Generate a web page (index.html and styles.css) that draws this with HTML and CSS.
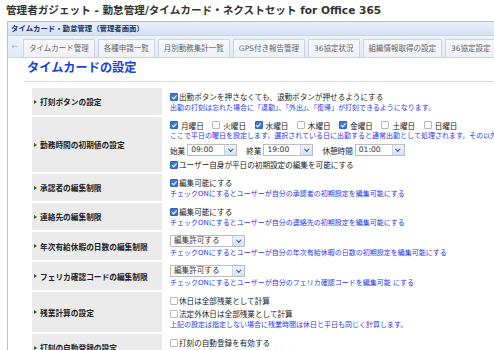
FILE: index.html
```html
<!DOCTYPE html>
<html lang="ja">
<head>
  <meta charset="UTF-8">
  <title>管理者ガジェット</title>
  <link rel="stylesheet" href="styles.css">
</head>
<body>
  <div class="page">
    <div class="page-title">管理者ガジェット - 勤怠管理/タイムカード・ネクストセット for Office 365</div>

    <div class="panel">
      <div class="panel-head">タイムカード・勤怠管理（管理者画面）</div>
      <div class="tabs">
        <span class="tab-back">&#8592;</span>
        <span class="tab">タイムカード管理</span>
        <span class="tab">各種申請一覧</span>
        <span class="tab">月別勤務集計一覧</span>
        <span class="tab">GPS付き報告管理</span>
        <span class="tab">36協定状況</span>
        <span class="tab">組織情報取得の設定</span>
        <span class="tab">36協定設定</span>
      </div>

      <div class="content">
        <div class="section-title">タイムカードの設定</div>

        <div class="settings">
          <div class="row">
            <div class="label">打刻ボタンの設定</div>
            <div class="value">
              <div class="line"><span class="cb on"></span>出勤ボタンを押さなくても、退勤ボタンが押せるようにする</div>
              <div class="note">出勤の打刻は忘れた場合に「退勤」、「外出」、「復帰」が打刻できるようになります。</div>
            </div>
          </div>

          <div class="row">
            <div class="label">勤務時間の初期値の設定</div>
            <div class="value">
              <div class="days">
                <span class="day"><span class="cb on"></span>月曜日</span>
                <span class="day"><span class="cb"></span>火曜日</span>
                <span class="day"><span class="cb on"></span>水曜日</span>
                <span class="day"><span class="cb"></span>木曜日</span>
                <span class="day"><span class="cb on"></span>金曜日</span>
                <span class="day"><span class="cb"></span>土曜日</span>
                <span class="day"><span class="cb"></span>日曜日</span>
              </div>
              <div class="note">ここで平日の曜日を設定します。選択されている日に出勤すると通常出勤として処理されます。その以外の曜日は休日として処理されます。</div>
              <div class="times">
                <span class="time-label">始業</span>
                <span class="select"><span class="select-text">09:00</span><span class="arrow"></span></span>
                <span class="time-label">終業</span>
                <span class="select"><span class="select-text">19:00</span><span class="arrow"></span></span>
                <span class="time-label">休憩時間</span>
                <span class="select"><span class="select-text">01:00</span><span class="arrow"></span></span>
              </div>
              <div class="line"><span class="cb on"></span>ユーザー自身が平日の初期設定の編集を可能にする</div>
            </div>
          </div>

          <div class="row">
            <div class="label">承認者の編集制限</div>
            <div class="value">
              <div class="line"><span class="cb on"></span>編集可能にする</div>
              <div class="note">チェックONにするとユーザーが自分の承認者の初期設定を編集可能にする</div>
            </div>
          </div>

          <div class="row">
            <div class="label">連絡先の編集制限</div>
            <div class="value">
              <div class="line"><span class="cb on"></span>編集可能にする</div>
              <div class="note">チェックONにするとユーザーが自分の連絡先の初期設定を編集可能にする</div>
            </div>
          </div>

          <div class="row">
            <div class="label">年次有給休暇の日数の編集制限</div>
            <div class="value">
              <div class="select-line">
                <span class="select wide"><span class="select-text">編集許可する</span><span class="arrow"></span></span>
              </div>
              <div class="note">チェックONにするとユーザーが自分の年次有給休暇の日数の初期設定を編集可能にする</div>
            </div>
          </div>

          <div class="row">
            <div class="label">フェリカ確認コードの編集制限</div>
            <div class="value">
              <div class="select-line">
                <span class="select wide"><span class="select-text">編集許可する</span><span class="arrow"></span></span>
              </div>
              <div class="note">チェックONにするとユーザーが自分のフェリカ確認コードを編集可能 にする</div>
            </div>
          </div>

          <div class="row">
            <div class="label">残業計算の設定</div>
            <div class="value">
              <div class="line"><span class="cb"></span>休日は全部残業として計算</div>
              <div class="line"><span class="cb"></span>法定外休日は全部残業として計算</div>
              <div class="note">上記の設定は指定しない場合に残業時間は休日と平日も同じく計算します。</div>
            </div>
          </div>

          <div class="row">
            <div class="label">打刻の自動登録の設定</div>
            <div class="value">
              <div class="line"><span class="cb"></span>打刻の自動登録を有効する</div>
              <div class="note">チェックONにすると打刻の自動登録を有効にする</div>
            </div>
          </div>
        </div>
      </div>
    </div>
  </div>
</body>
</html>
```

FILE: styles.css
```css
html, body {
  margin: 0;
  padding: 0;
  overflow: hidden;
}
body {
  font-family: "DejaVu Sans", "Noto Sans CJK JP", sans-serif;
  color: #222222;
  background: #ffffff;
}
.page {
  width: 560px;
  height: 350px;
  overflow: hidden;
}
.page-title {
  font-size: 10.6px;
  font-weight: bold;
  color: #333333;
  line-height: 14px;
  padding: 3px 0 4px 6px;
  white-space: nowrap;
}

/* panel frame */
.panel {
  margin-left: 7px;
  border: 1px solid #a9c3e8;
  border-right: none;
}
.panel-head {
  height: 13px;
  line-height: 13px;
  padding-left: 3px;
  font-size: 7.4px;
  font-weight: bold;
  color: #1e3563;
  background: linear-gradient(to bottom, #e8eff9, #d5e2f4);
  border-bottom: 1px solid #c3d5ee;
}
.tabs {
  display: flex;
  align-items: center;
  gap: 3px;
  height: 21px;
  padding-left: 2px;
  background: linear-gradient(to bottom, #edf2fa, #e2eaf6);
  border-bottom: 1px solid #c3d5ee;
  white-space: nowrap;
}
.tab-back {
  font-size: 8px;
  color: #a8b4c4;
  width: 10px;
  text-align: center;
}
.tab {
  height: 17px;
  line-height: 17px;
  padding: 0 5px;
  font-size: 7.5px;
  color: #666666;
  background: linear-gradient(to bottom, #f6f8fb, #edf1f7);
  border: 1px solid #c9d5e6;
  border-bottom: none;
  margin-top: 2px;
}

/* content */
.content {
  padding: 3px 0 20px 0;
}
.section-title {
  margin-left: 16px;
  padding: 0 0 6px 3px;
  font-size: 12.2px;
  line-height: 14px;
  font-weight: bold;
  color: #2040e0;
  border-bottom: 1px solid #dddddd;
}
.settings {
  margin: 6px 0 0 24px;
  display: flex;
  flex-direction: column;
  gap: 2px;
}
.row {
  display: flex;
  align-items: stretch;
}
.label {
  width: 122px;
  flex: none;
  display: flex;
  align-items: center;
  padding-left: 8px;
  background: #ebebeb;
  font-size: 7.7px;
  font-weight: bold;
  color: #222222;
  white-space: nowrap;
  position: relative;
}
.label::before {
  content: "";
  position: absolute;
  left: 2px;
  top: 50%;
  margin-top: -2px;
  border-left: 3px solid #2f5e2f;
  border-top: 2px solid transparent;
  border-bottom: 2px solid transparent;
}
.value {
  padding: 2px 0 1px 8px;
  white-space: nowrap;
}
.line {
  display: flex;
  align-items: center;
  height: 13px;
  font-size: 7.6px;
}
.note {
  height: 11px;
  line-height: 11px;
  font-size: 7px;
  color: #2a3ae6;
}
.days {
  display: flex;
  align-items: center;
  height: 12px;
  font-size: 7.6px;
}
.day {
  display: flex;
  align-items: center;
  margin-right: 8.5px;
}
.day .cb {
  margin-right: 3px;
}

/* checkboxes */
.cb {
  width: 6px;
  height: 6px;
  flex: none;
  margin-right: 1px;
  border: 1px solid #b8b8b8;
  border-radius: 1px;
  background: #ffffff;
  position: relative;
}
.cb.on {
  background: #3b78d8;
  border-color: #2d62b8;
}
.cb.on::after {
  content: "";
  position: absolute;
  left: 1.5px;
  top: 0;
  width: 1.5px;
  height: 3.5px;
  border-right: 1.2px solid #ffffff;
  border-bottom: 1.2px solid #ffffff;
  transform: rotate(40deg);
}

/* selects */
.times {
  display: flex;
  align-items: center;
  height: 12px;
  margin: 2px 0 2px 0;
  font-size: 7.6px;
}
.time-label {
  margin-right: 2px;
}
.times .select {
  margin-right: 9px;
}
.select-line {
  display: flex;
  align-items: center;
  height: 14px;
}
.select {
  display: flex;
  align-items: stretch;
  width: 50px;
  height: 12px;
  border: 1px solid #bcbcbc;
  box-sizing: border-box;
  background: #ffffff;
}
.select.wide {
  width: 75px;
}
.select-text {
  flex: 1;
  padding-left: 3px;
  font-size: 7.6px;
  line-height: 10px;
  color: #333333;
}
.arrow {
  width: 11px;
  background: linear-gradient(to bottom, #eef3fa, #d6e2f1);
  border-left: 1px solid #c8d4e4;
  position: relative;
}
.arrow::after {
  content: "";
  position: absolute;
  left: 3.5px;
  top: 2px;
  width: 2.5px;
  height: 2.5px;
  border-right: 1.3px solid #2b4f9a;
  border-bottom: 1.3px solid #2b4f9a;
  transform: rotate(45deg);
}
```
